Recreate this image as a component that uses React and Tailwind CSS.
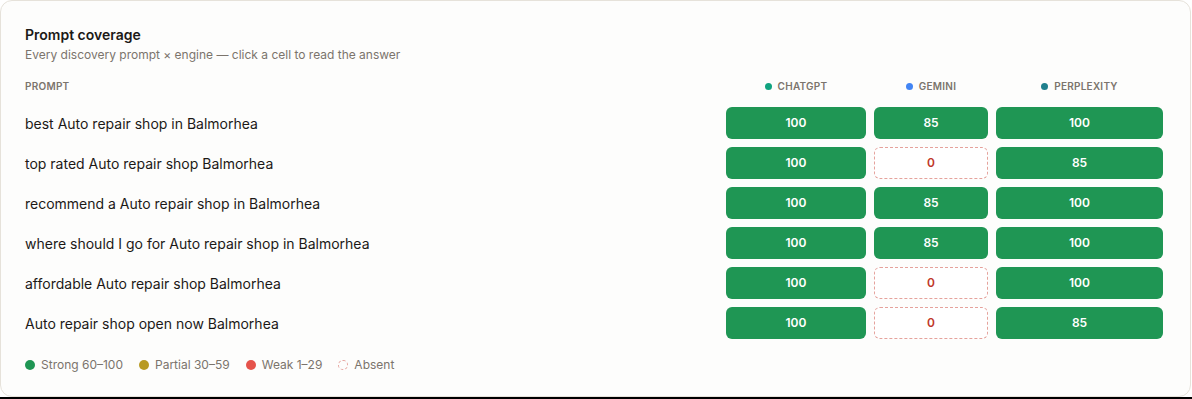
import React from 'react';

const engines = [
  { name: 'ChatGPT', dot: 'bg-[#10a37f]' },
  { name: 'Gemini', dot: 'bg-[#4285f4]' },
  { name: 'Perplexity', dot: 'bg-[#20808d]' },
];

const rows = [
  { prompt: 'best Auto repair shop in Balmorhea', scores: [100, 85, 100] },
  { prompt: 'top rated Auto repair shop Balmorhea', scores: [100, 0, 85] },
  { prompt: 'recommend a Auto repair shop in Balmorhea', scores: [100, 85, 100] },
  { prompt: 'where should I go for Auto repair shop in Balmorhea', scores: [100, 85, 100] },
  { prompt: 'affordable Auto repair shop Balmorhea', scores: [100, 0, 100] },
  { prompt: 'Auto repair shop open now Balmorhea', scores: [100, 0, 85] },
];

const Cell = ({ score }) => {
  if (score === 0) {
    return (
      <button className="h-8 rounded-md border border-dashed border-[#e5a29c] bg-white text-[12px] font-semibold text-[#c0392b]">
        0
      </button>
    );
  }
  const tone =
    score >= 60 ? 'bg-[#1f9654]' : score >= 30 ? 'bg-[#b89a23]' : 'bg-[#e5534b]';
  return (
    <button className={`h-8 rounded-md ${tone} text-[12px] font-semibold text-white`}>
      {score}
    </button>
  );
};

const Legend = () => (
  <div className="mt-[18px] flex items-center gap-4 text-[12px] leading-4 text-[#7b746c]">
    <div className="flex items-center gap-1.5">
      <span className="h-2.5 w-2.5 rounded-full bg-[#1f9654]" />
      Strong 60–100
    </div>
    <div className="flex items-center gap-1.5">
      <span className="h-2.5 w-2.5 rounded-full bg-[#b89a23]" />
      Partial 30–59
    </div>
    <div className="flex items-center gap-1.5">
      <span className="h-2.5 w-2.5 rounded-full bg-[#e5534b]" />
      Weak 1–29
    </div>
    <div className="flex items-center gap-1.5">
      <span className="h-2.5 w-2.5 rounded-full border border-dashed border-[#e5a29c]" />
      Absent
    </div>
  </div>
);

export default function App() {
  return (
    <div className="flex h-[399px] w-[1192px] flex-col bg-white font-['Inter',sans-serif]">
      <div className="h-[397px] w-[1191px] rounded-xl border border-[#e6e2da] bg-[#fdfdfc] pt-6 pr-[27px] pb-6 pl-6">
        <h2 className="text-[14px] font-semibold leading-5 text-[#1c1917]">Prompt coverage</h2>
        <p className="mt-0.5 text-[12px] leading-4 text-[#7b746c]">
          Every discovery prompt × engine — click a cell to read the answer
        </p>

        <div className="mt-[15px] grid grid-cols-[1fr_140px_114px_167px] gap-x-2 gap-y-2">
          <div className="mb-[5px] flex h-4 items-center text-[10px] font-semibold uppercase tracking-wide text-[#7b746c]">
            Prompt
          </div>
          {engines.map((e) => (
            <div
              key={e.name}
              className="mb-[5px] flex h-4 items-center justify-center gap-1.5 text-[10px] font-semibold uppercase tracking-wide text-[#7b746c]"
            >
              <span className={`h-[7px] w-[7px] rounded-full ${e.dot}`} />
              {e.name}
            </div>
          ))}

          {rows.map((r) => (
            <React.Fragment key={r.prompt}>
              <div className="flex h-8 items-center text-[14px] text-[#1c1917]">{r.prompt}</div>
              {r.scores.map((s, i) => (
                <Cell key={i} score={s} />
              ))}
            </React.Fragment>
          ))}
        </div>

        <Legend />
      </div>
      <div className="h-[2px] w-full bg-black" />
    </div>
  );
}
